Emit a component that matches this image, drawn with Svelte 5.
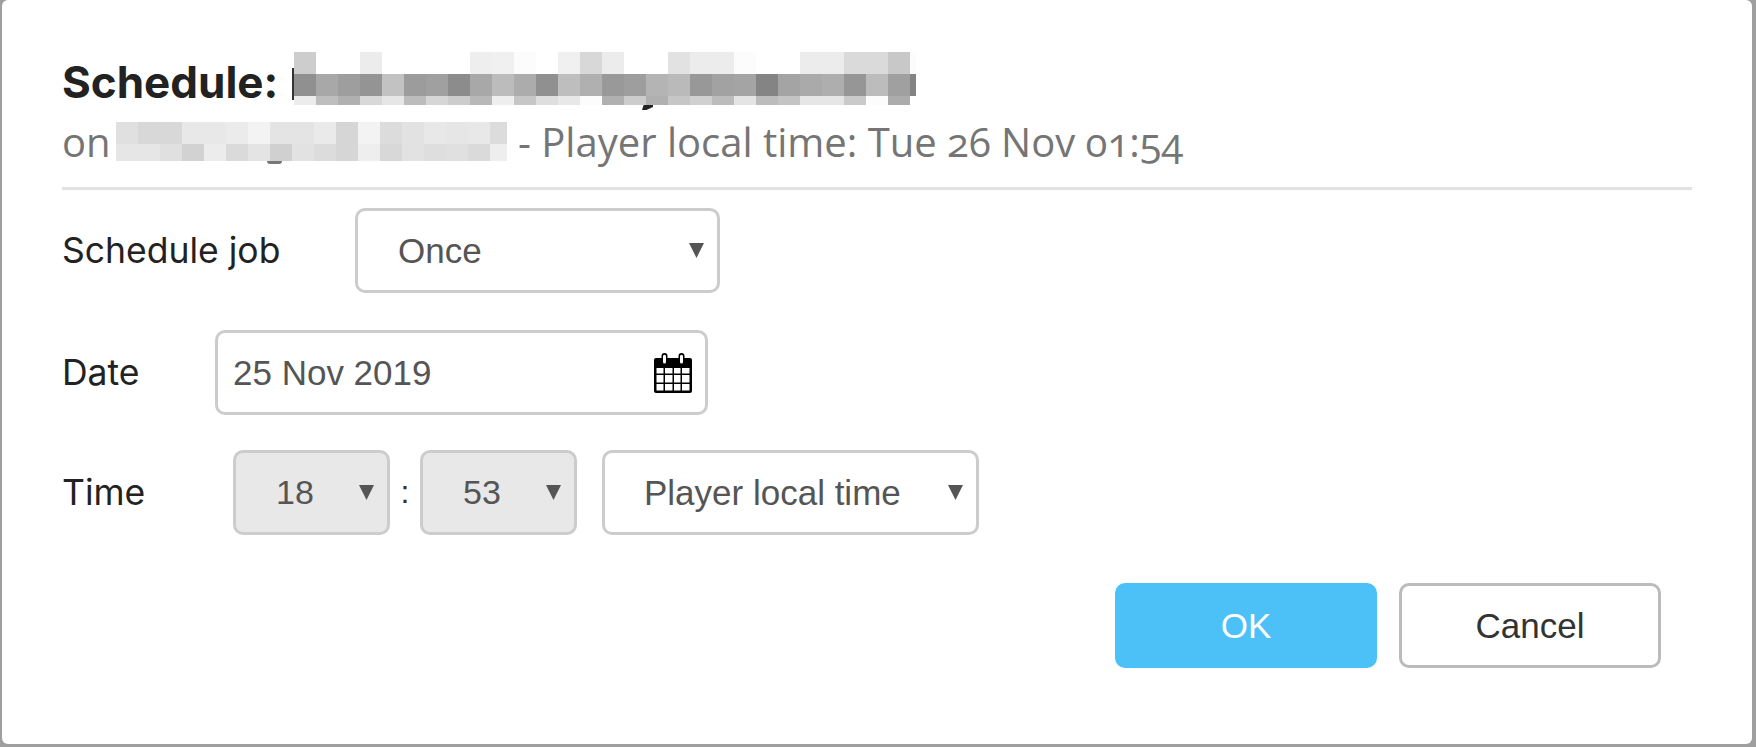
<script>
  const row1 = ['cdcdcd','fff','fff','ececec','fff','fff','fff','fff','eee','f0f0f0','fcfcfc','fff','f0f0f0','d8d8d8','ececec','fff','fff','e2e2e2','ececec','ececec','fcfcfc','fff','fff','ececec','ececec','dadada','dadada','c8c8c8','fcfcfc'];
  const row2 = ['909090','a8a8a8','9e9e9e','949494','c2c2c2','9c9c9c','a0a0a0','8c8c8c','a8a8a8','bcbcbc','acacac','909090','bebebe','b0b0b0','999','9e9e9e','b4b4b4','bababa','989898','a2a2a2','a4a4a4','848484','a4a4a4','aaa','aeaeae','969696','bcbcbc','a0a0a0','848484'];
  const row3 = ['ececec','bebebe','b0b0b0','d8d8d8','e6e6e6','bcbcbc','d6d6d6','ccc','b8b8b8','eee','c6c6c6','dedede','e8e8e8','fcfcfc','b0b0b0','ccc','b0b0b0','c6c6c6','d0d0d0','bcbcbc','e4e4e4','bcbcbc','c4c4c4','e6e6e6','e6e6e6','cacaca','fcfcfc','acacac','fff'];
  const sub1 = ['e0e0e0','d8d8d8','d8d8d8','e8e8e8','e8e8e8','ebebeb','f3f3f3','e4e4e4','e4e4e4','eaeaea','d6d6d6','f3f3f3','dcdcdc','e2e2e2','e8e8e8','e6e6e6','e8e8e8','dcdcdc'];
  const sub2 = ['e6e6e6','e6e6e6','e0e0e0','d2d2d2','ececec','dadada','e4e4e4','d0d0d0','e2e2e2','dcdcdc','d6d6d6','eee','d8d8d8','e2e2e2','dedede','e0e0e0','dadada','eee'];
  const titleCells = [...row1, ...row2, ...row3];
  const subCells = [...sub1, ...sub2];
</script>

<div class="page">
  <div class="dialog">
    <div class="title">
      <span class="title-text"><b>Schedule:</b></span>
      <div class="mosaic title-mosaic">
        <i class="bar"></i>
        {#each titleCells as c}<span style="background:#{c}"></span>{/each}
        <i class="tail"></i>
      </div>
    </div>
    <div class="sub">
      <span class="on">on</span>
      <div class="mosaic sub-mosaic">
        {#each subCells as c}<span style="background:#{c}"></span>{/each}
        <i class="g-tail"></i>
      </div>
      <span class="local">- Player local time: Tue 26 Nov 01:54</span>
    </div>
    <div class="rule"></div>

    <div class="row row-job">
      <div class="label">Schedule job</div>
      <div class="field job">
        <span>Once</span>
        <svg class="arrow" viewBox="0 0 15 15"><path d="M0 0H15L7.5 15Z" /></svg>
      </div>
    </div>

    <div class="row row-date">
      <div class="label">Date</div>
      <div class="field date">
        <span>25 Nov 2019</span>
        <svg class="cal" viewBox="0 0 38 40">
          <path d="M2 5h5.5V3a3 3 0 0 1 6 0v2h11V3a3 3 0 0 1 6 0v2H36a2 2 0 0 1 2 2v31a2 2 0 0 1-2 2H2a2 2 0 0 1-2-2V7a2 2 0 0 1 2-2Z" fill="#000"/>
          <path d="M9 3.2a1.5 1.5 0 0 1 3 0V9a1.5 1.5 0 0 1-3 0ZM26 3.2a1.5 1.5 0 0 1 3 0V9a1.5 1.5 0 0 1-3 0Z" fill="#fff"/>
          <path d="M2.5 15h7v5.5h-7ZM11 15h7.5v5.5H11ZM20 15h6.5v5.5H20ZM28 15h7.5v5.5H28ZM2.5 22h7v7.5h-7ZM11 22h7.5v7.5H11ZM20 22h6.5v7.5H20ZM28 22h7.5v7.5H28ZM2.5 31h7v6.5h-7ZM11 31h7.5v6.5H11ZM20 31h6.5v6.5H20ZM28 31h7.5v6.5H28Z" fill="#fff"/>
        </svg>
      </div>
    </div>

    <div class="row row-time">
      <div class="label">Time</div>
      <div class="field num disabled">
        <span>18</span>
        <svg class="arrow" viewBox="0 0 15 15"><path d="M0 0H15L7.5 15Z" /></svg>
      </div>
      <span class="colon">:</span>
      <div class="field num disabled">
        <span>53</span>
        <svg class="arrow" viewBox="0 0 15 15"><path d="M0 0H15L7.5 15Z" /></svg>
      </div>
      <div class="field zone">
        <span>Player local time</span>
        <svg class="arrow" viewBox="0 0 15 15"><path d="M0 0H15L7.5 15Z" /></svg>
      </div>
    </div>

    <div class="actions">
      <button class="btn ok">OK</button>
      <button class="btn cancel">Cancel</button>
    </div>
  </div>
</div>

<style>
  :global(body) {
    margin: 0;
    background: #9f9f9f;
  }
  .page {
    width: 1756px;
    height: 747px;
    padding: 0 4px 3px 2px;
    box-sizing: border-box;
    overflow: hidden;
  }
  .dialog {
    height: 744px;
    background: #fff;
    border-radius: 6px;
    padding: 52px 0 0 60px;
    box-sizing: border-box;
    font-family: "Liberation Sans", Arial, sans-serif;
  }
  .title {
    display: flex;
    height: 53px;
  }
  .title-text {
    width: 232px;
    padding-top: 4px;
    font-family: Inter, sans-serif;
    font-size: 44px;
    line-height: 53px;
    color: #222;
    white-space: nowrap;
  }
  .title-text b {
    font-weight: 650;
  }
  .mosaic {
    position: relative;
    display: grid;
  }
  .title-mosaic {
    grid-template-columns: repeat(28, 22px) 6px;
    grid-template-rows: 22px 22px 9px;
  }
  .sub-mosaic {
    grid-template-columns: repeat(17, 22px) 17px;
    grid-template-rows: 22px 17px;
  }
  .bar {
    position: absolute;
    left: -2px;
    top: 16px;
    width: 2px;
    height: 32px;
    background: #333;
  }
  .tail {
    position: absolute;
    left: 348px;
    top: 53px;
    width: 11px;
    height: 5px;
    background: #222;
    clip-path: polygon(0 100%, 40% 100%, 100% 40%, 100% 0, 15% 0);
  }
  .g-tail {
    position: absolute;
    left: 151px;
    top: 39px;
    width: 15px;
    height: 3px;
    background: #777;
    border-radius: 0 0 8px 8px;
  }
  .sub {
    display: flex;
    margin-top: 17px;
    height: 39px;
    font-family: "Open Sans", sans-serif;
    color: #757575;
    font-size: 40px;
    line-height: 39px;
    white-space: nowrap;
  }
  .on {
    width: 54px;
  }
  .local {
    margin-left: 11px;
    font-variant-numeric: oldstyle-nums;
  }
  .rule {
    width: 1630px;
    height: 3px;
    margin-top: 26px;
    background: #e2e2e2;
  }
  .row {
    display: flex;
    align-items: center;
    height: 85px;
  }
  .row-job {
    margin-top: 18px;
  }
  .row-date {
    margin-top: 37px;
  }
  .row-time {
    margin-top: 35px;
  }
  .label {
    font-family: Inter, sans-serif;
    font-size: 35.5px;
    font-weight: 400;
    color: #222;
    white-space: nowrap;
  }
  .row-job .label {
    width: 293px;
  }
  .row-date .label {
    width: 153px;
  }
  .row-time .label {
    width: 171px;
  }
  .field {
    position: relative;
    display: flex;
    align-items: center;
    box-sizing: border-box;
    height: 85px;
    border: 3px solid #ccc;
    border-radius: 10px;
    background: #fff;
    font-size: 35px;
    color: #555;
  }
  .arrow {
    position: absolute;
    width: 15px;
    height: 15px;
    top: 32px;
    fill: #555;
  }
  .job {
    width: 365px;
    padding-left: 40px;
  }
  .job .arrow {
    right: 13px;
  }
  .date {
    width: 493px;
    padding-left: 15px;
  }
  .cal {
    position: absolute;
    left: 436px;
    top: 20px;
    width: 38px;
    height: 40px;
  }
  .num {
    width: 157px;
    padding-left: 40px;
    font-size: 34px;
  }
  .num .arrow {
    right: 13px;
  }
  .disabled {
    background: #e8e8e8;
  }
  .colon {
    width: 30px;
    text-align: center;
    font-size: 32px;
    color: #333;
  }
  .zone {
    width: 377px;
    margin-left: 25px;
    padding-left: 39px;
  }
  .zone .arrow {
    right: 13px;
  }
  .actions {
    display: flex;
    gap: 22px;
    margin: 48px 0 0 1053px;
  }
  .btn {
    box-sizing: border-box;
    width: 262px;
    height: 85px;
    border-radius: 10px;
    font-family: "Liberation Sans", Arial, sans-serif;
    font-size: 35px;
    padding: 0;
  }
  .ok {
    background: #4cc1f8;
    border: 0;
    color: #fff;
  }
  .cancel {
    background: #fff;
    border: 3px solid #bbb;
    color: #333;
  }
</style>
